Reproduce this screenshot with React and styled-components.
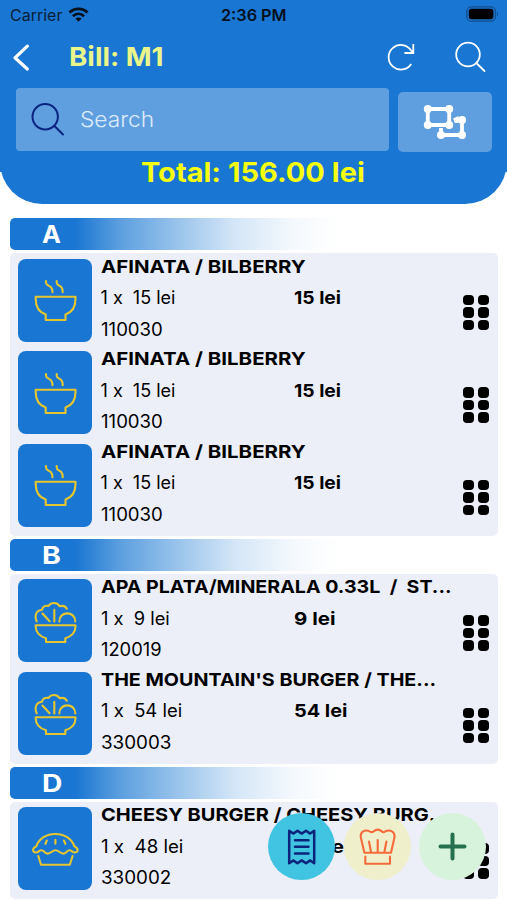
import React, { useLayoutEffect, useRef, useState } from 'react';
import styled, { createGlobalStyle } from 'styled-components';

const BLUE = '#1976d2';
const YELLOW = '#e6c62e';

const GlobalStyle = createGlobalStyle`
  *, *::before, *::after { box-sizing: border-box; }
  html, body { margin: 0; padding: 0; background: #fff; overflow: hidden; }
  body { font-family: Inter, "Liberation Sans", sans-serif; color: #000; }
`;

/* A single line of text stretched horizontally to a fixed measure. */
const FitBox = styled.span`
  display: block;
  width: ${(p) => p.$width}px;
  white-space: pre;
`;
const FitInner = styled.span`
  display: inline-block;
  transform-origin: left center;
`;
function Fit({ width, children }) {
  const ref = useRef(null);
  const [scale, setScale] = useState(1);
  useLayoutEffect(() => {
    const fit = () => setScale(width / ref.current.offsetWidth);
    fit();
    document.fonts?.ready.then(() => ref.current && fit());
  }, [width, children]);
  return (
    <FitBox $width={width}>
      <FitInner ref={ref} style={{ transform: `scaleX(${scale})` }}>{children}</FitInner>
    </FitBox>
  );
}

const Screen = styled.main`
  position: relative;
  width: 507px;
  height: 900px;
  overflow: hidden;
  background: linear-gradient(${BLUE} 172px, #fff 172px);
`;

const Header = styled.header`
  display: flex;
  flex-direction: column;
  height: 204px;
  background: ${BLUE};
  border-radius: 0 0 42px 42px;
`;

const StatusBar = styled.div`
  display: grid;
  grid-template-columns: 1fr auto 1fr;
  align-items: center;
  height: 30px;
  padding: 0 8px 0 10px;
  font-size: 16px;
  line-height: 30px;
  color: #0b1f38;
`;
const Carrier = styled.div`
  display: flex;
  align-items: center;
  gap: 6px;
`;
const Clock = styled.div`
  margin-left: -2px;
  font-weight: 600;
  color: #06101c;
`;
const Battery = styled.svg`
  justify-self: end;
  margin-top: -2px;
`;

const NavBar = styled.div`
  display: flex;
  align-items: center;
  height: 54px;
  padding: 0 20px 0 12px;
`;
const Title = styled.h1`
  flex: 1;
  margin: 0 0 0 38px;
  font-size: 26px;
  line-height: 54px;
  font-weight: 700;
  color: #eaf58a;
`;
const NavIcons = styled.div`
  display: flex;
  align-items: center;
  gap: 40px;
`;

const SearchRow = styled.div`
  display: flex;
  align-items: flex-end;
  gap: 9px;
  height: 68px;
  padding: 0 15px 0 16px;
`;
const SearchField = styled.div`
  display: flex;
  align-items: center;
  gap: 15px;
  width: 373px;
  height: 63px;
  margin-bottom: 1px;
  padding: 0 0 2px 15px;
  border-radius: 4px;
  background: #609fdf;
  font-size: 21.5px;
  font-weight: 300;
  color: #dcebfa;
`;
const GroupButton = styled.button`
  display: flex;
  align-items: center;
  justify-content: center;
  width: 94px;
  height: 60px;
  margin: 0;
  padding: 0;
  border: 0;
  border-radius: 5px;
  background: #609fdf;
`;

const Total = styled.div`
  display: flex;
  justify-content: center;
  height: 42px;
  padding-right: 2px;
  font-size: 27px;
  line-height: 41px;
  font-weight: 700;
  color: #f7ff10;
`;

const Sections = styled.div`
  display: flex;
  flex-direction: column;
  gap: 3px;
  padding: 14px 9.5px 0 10px;
`;
const SectionHeader = styled.h2`
  height: 32px;
  margin: 0;
  padding-left: 32px;
  border-radius: 5px;
  background: linear-gradient(90deg, ${BLUE} 0, ${BLUE} 65px, #5c9fdf 110px, #9cc5ec 170px, #d4e6f7 225px, #f5f9fd 285px, #fff 330px);
  font-size: 24px;
  line-height: 33px;
  font-weight: 700;
  color: #fff;
`;
const Items = styled.ul`
  margin: 0;
  padding: 5.5px 8px 0 8px;
  height: ${(p) => p.$rows * 92.5 + 5}px;
  border-radius: 5px;
  background: #eceff8;
  list-style: none;
`;
const Item = styled.li`
  display: grid;
  grid-template-columns: 74px 1fr 26.5px;
  column-gap: 8.5px;
  height: 92.5px;
`;
const Thumb = styled.div`
  display: flex;
  align-items: center;
  justify-content: center;
  width: 74px;
  height: 83px;
  border-radius: 8px;
  background: ${BLUE};
`;
const Details = styled.div`
  display: flex;
  flex-direction: column;
  margin-top: -8px;
  font-size: 18px;
  line-height: 31.5px;
`;
const Name = styled.div`
  font-weight: 700;
`;
const Amounts = styled.div`
  display: grid;
  grid-template-columns: 193px 1fr;
`;
const Price = styled.div`
  font-weight: 700;
`;
const Grip = styled.div`
  display: grid;
  grid-template-columns: 11px 11px;
  grid-auto-rows: 10.6px;
  gap: 2.1px 4.2px;
  height: 36px;
  margin-top: 36px;
`;
const Dot = styled.i`
  border-radius: 4px;
  background: #000;
`;

const Actions = styled.div`
  position: absolute;
  left: 268px;
  top: 813px;
  display: flex;
  gap: 8.7px;
`;
const Fab = styled.button`
  width: 67px;
  height: 67px;
  margin: 0;
  padding: 0;
  border: 0;
  border-radius: 50%;
  background: ${(p) => p.$bg};
  svg { display: block; }
`;

const Stroke = ({ w, h, color, width = 2, children, ...rest }) => (
  <svg width={w} height={h} viewBox={`0 0 ${w} ${h}`} fill="none" stroke={color}
    strokeWidth={width} strokeLinecap="round" strokeLinejoin="round" {...rest}>
    {children}
  </svg>
);

const SoupIcon = () => (
  <Stroke w={44} h={44} color={YELLOW} width={2.1}>
    <path d="M2.7 18.8H42.5V21C42.5 29 38.5 34.5 32.5 36.5V42H12.7V36.5C6.7 34.5 2.7 29 2.7 21Z" />
    <path d="M13 3V4.5C13 7.5 16 7.2 18 9.2C19.4 10.6 19.5 12 19.5 14.3M23.7 3V4.5C23.7 7.5 26.4 7.2 28.4 9.2C29.7 10.6 29.7 12 29.7 14.3" />
  </Stroke>
);

const SaladIcon = () => (
  <Stroke w={44} h={44} color={YELLOW} width={2.1}>
    <path d="M2.7 26.2H42.5V27.5C42.5 33 38.5 37.5 32.3 39.2V43H13V39.2C6.8 37.5 2.7 33 2.7 27.5Z" />
    <path d="M3.7 22.3C2.2 18.7 2.5 14.5 4.6 12.5C5.8 11.3 7.5 11.2 9 10.8C9.5 7.5 12 6.2 15.5 6.9C18 3 24.5 2.8 26.6 7.2C29.6 6.4 32.5 7.2 33.8 9.7" />
    <path d="M26.3 22.4C26.3 11.7 42.3 11.7 42.3 22.4M9.5 14.5L16.6 22.2M21.3 10.7V22.4" />
  </Stroke>
);

const PieIcon = () => (
  <Stroke w={48} h={48} color={YELLOW} width={2.1}>
    <path d="M5.4 21.2C8 13.5 15.5 9 24.3 9S40.7 13.5 43.3 21.2C47.6 23 47.8 27.4 43.5 27.5C41.5 27.6 40.6 25.3 38.6 25.3C35.6 25.3 35.3 28.6 32.2 28.6C29 28.6 28 25.3 24.5 25.3S20 28.6 16.8 28.6C13.6 28.6 13.3 25.3 10.3 25.3C8.2 25.3 7.2 27.6 5.2 27.5C.8 27.4 1.2 23 5.4 21.2Z" />
    <path d="M7.3 31L10 39.8H38.8L41.6 31M15.8 15.5L14.4 18.8M24.4 14.8V18.8M33 15.5L34.4 18.8" />
  </Stroke>
);

const ICONS = { soup: SoupIcon, salad: SaladIcon, pie: PieIcon };

const afinata = { name: 'AFINATA / BILBERRY', nameW: 204.5, qty: '1 x  15 lei', qtyW: 75, price: '15 lei', priceW: 47, code: '110030', codeW: 62, icon: 'soup' };
const SECTIONS = [
  { letter: 'A', letterW: 19, items: [afinata, afinata, afinata] },
  {
    letter: 'B', letterW: 19,
    items: [
      { name: 'APA PLATA/MINERALA 0.33L  /  ST...', nameW: 351, qty: '1 x  9 lei', qtyW: 69, price: '9 lei', priceW: 41, code: '120019', codeW: 61, icon: 'salad' },
      { name: "THE MOUNTAIN'S BURGER / THE...", nameW: 335, qty: '1 x  54 lei', qtyW: 81, price: '54 lei', priceW: 53, code: '330003', codeW: 70, icon: 'salad' },
    ],
  },
  {
    letter: 'D', letterW: 20,
    items: [
      { name: 'CHEESY BURGER / CHEESY BURG...', nameW: 348, qty: '1 x  48 lei', qtyW: 82, price: '48 lei', priceW: 56, code: '330002', codeW: 70, icon: 'pie' },
    ],
  },
];

function BillItem({ item }) {
  const Icon = ICONS[item.icon];
  return (
    <Item>
      <Thumb><Icon /></Thumb>
      <Details>
        <Name><Fit width={item.nameW}>{item.name}</Fit></Name>
        <Amounts>
          <Fit width={item.qtyW}>{item.qty}</Fit>
          <Price><Fit width={item.priceW}>{item.price}</Fit></Price>
        </Amounts>
        <Fit width={item.codeW}>{item.code}</Fit>
      </Details>
      <Grip>{[0, 1, 2, 3, 4, 5].map((n) => <Dot key={n} />)}</Grip>
    </Item>
  );
}

export default function App() {
  return (
    <Screen>
      <GlobalStyle />
      <Header>
        <StatusBar>
          <Carrier>
            <Fit width={52}>Carrier</Fit>
            <svg width="21" height="16" viewBox="0 0 21 16" fill="none" stroke="#06101c" strokeWidth="2.8">
              <path d="M1.4 5.6C6.6.6 14.4.6 19.6 5.6M4.9 9.2C8.2 6.2 12.8 6.2 16.1 9.2" />
              <path d="M7.4 11.5C9.2 10 11.8 10 13.6 11.5L10.5 14.7Z" fill="#06101c" stroke="none" />
            </svg>
          </Carrier>
          <Clock><Fit width={66}>2:36 PM</Fit></Clock>
          <Battery width="33" height="16" viewBox="0 0 33 16">
            <rect x=".8" y=".8" width="28.6" height="14.4" rx="4.5" fill="none" stroke="#124f8c" strokeWidth="1.3" />
            <rect x="2.8" y="2.8" width="24.6" height="10.4" rx="2.7" fill="#000" />
            <path d="M31 5.5C32.5 6.3 32.5 9.5 31 10.3Z" fill="#124f8c" />
          </Battery>
        </StatusBar>
        <NavBar>
          <Stroke w={19} h={28} color="#fff" width={3.2}>
            <path d="M15.3 3.2L3 14.8L15.3 26" />
          </Stroke>
          <Title><Fit width={95}>Bill: M1</Fit></Title>
          <NavIcons>
            <Stroke w={28} h={30} color="#fff" width={1.8} strokeLinecap="butt" strokeLinejoin="miter">
              <path d="M24.2 22A12.3 12.3 0 1 1 24 8.2L26 10.8M26.3 2V11H17.4" />
            </Stroke>
            <Stroke w={32} h={32} color="#fff" width={1.8}>
              <circle cx="13" cy="13.5" r="11.8" />
              <path d="M21.3 22L29.5 30" />
            </Stroke>
          </NavIcons>
        </NavBar>
        <SearchRow>
          <SearchField>
            <Stroke w={34} h={34} color="#0b2380" width={2}>
              <circle cx="14.2" cy="14.8" r="12.7" />
              <path d="M23.2 23.7L32 32.5" />
            </Stroke>
            <Fit width={74}>Search</Fit>
          </SearchField>
          <GroupButton aria-label="Group">
            <svg width="44" height="36" viewBox="0 0 44 36" fill="none" stroke="#fff" strokeWidth="3.8">
              <path d="M4.8 5H26.2V21H4.8ZM31 16H39V31H18V24" />
              <path d="M30 14.5L35.5 12V19H32Z" fill="#fff" stroke="none" />
              <g fill="#fff" stroke="none">
                <circle cx="4.8" cy="5" r="4" />
                <circle cx="26.2" cy="5" r="4" />
                <circle cx="4.8" cy="21" r="4" />
                <circle cx="26.2" cy="21" r="4" />
                <circle cx="39" cy="16" r="4" />
                <circle cx="39" cy="31" r="4" />
                <circle cx="18" cy="31" r="4" />
              </g>
            </svg>
          </GroupButton>
        </SearchRow>
        <Total><Fit width={223.5}>Total: 156.00 lei</Fit></Total>
      </Header>

      <Sections>
        {SECTIONS.map((section) => (
          <React.Fragment key={section.letter}>
            <SectionHeader><Fit width={section.letterW}>{section.letter}</Fit></SectionHeader>
            <Items $rows={section.items.length}>
              {section.items.map((item, i) => <BillItem key={i} item={item} />)}
            </Items>
          </React.Fragment>
        ))}
      </Sections>

      <Actions>
        <Fab $bg="#40c4e2" aria-label="Receipt">
          <Stroke w={67} h={67} color="#0c237c" width={2.5} strokeLinejoin="round">
            <path d="M21.2 17.8L25.2 20.6L29.5 17.8L33.7 20.6L38 17.8L42.2 20.6L46.2 17.8V50.2L42.2 47.4L38 50.2L33.7 47.4L29.5 50.2L25.2 47.4L21.2 50.2Z" />
            <path d="M27 27.2H40.5M27 33.8H40.5M27 40.5H40.5" />
          </Stroke>
        </Fab>
        <Fab $bg="#efefcb" aria-label="Kitchen">
          <Stroke w={67} h={67} color="#f66b3c" width={2.1}>
            <path d="M20.4 39.8L16.9 24.8C15.8 18.8 21.2 15.8 26 18.6C27.5 19.4 28.3 19.5 29.5 18.4C32 16.2 35.4 16.2 37.9 18.4C39 19.5 39.8 19.4 41 18.6C46 15.8 51.4 18.8 50.4 24.8L47 39.8Z" />
            <path d="M25 28.5L27 39M33.7 27V39M42.4 28.5L40.4 39M21.3 43.5V50.7H46V43.5" />
          </Stroke>
        </Fab>
        <Fab $bg="#d8f3dc" aria-label="Add">
          <Stroke w={67} h={67} color="#26704f" width={4}>
            <path d="M33.5 21.5V45.5M21.5 33.5H45.5" />
          </Stroke>
        </Fab>
      </Actions>
    </Screen>
  );
}
